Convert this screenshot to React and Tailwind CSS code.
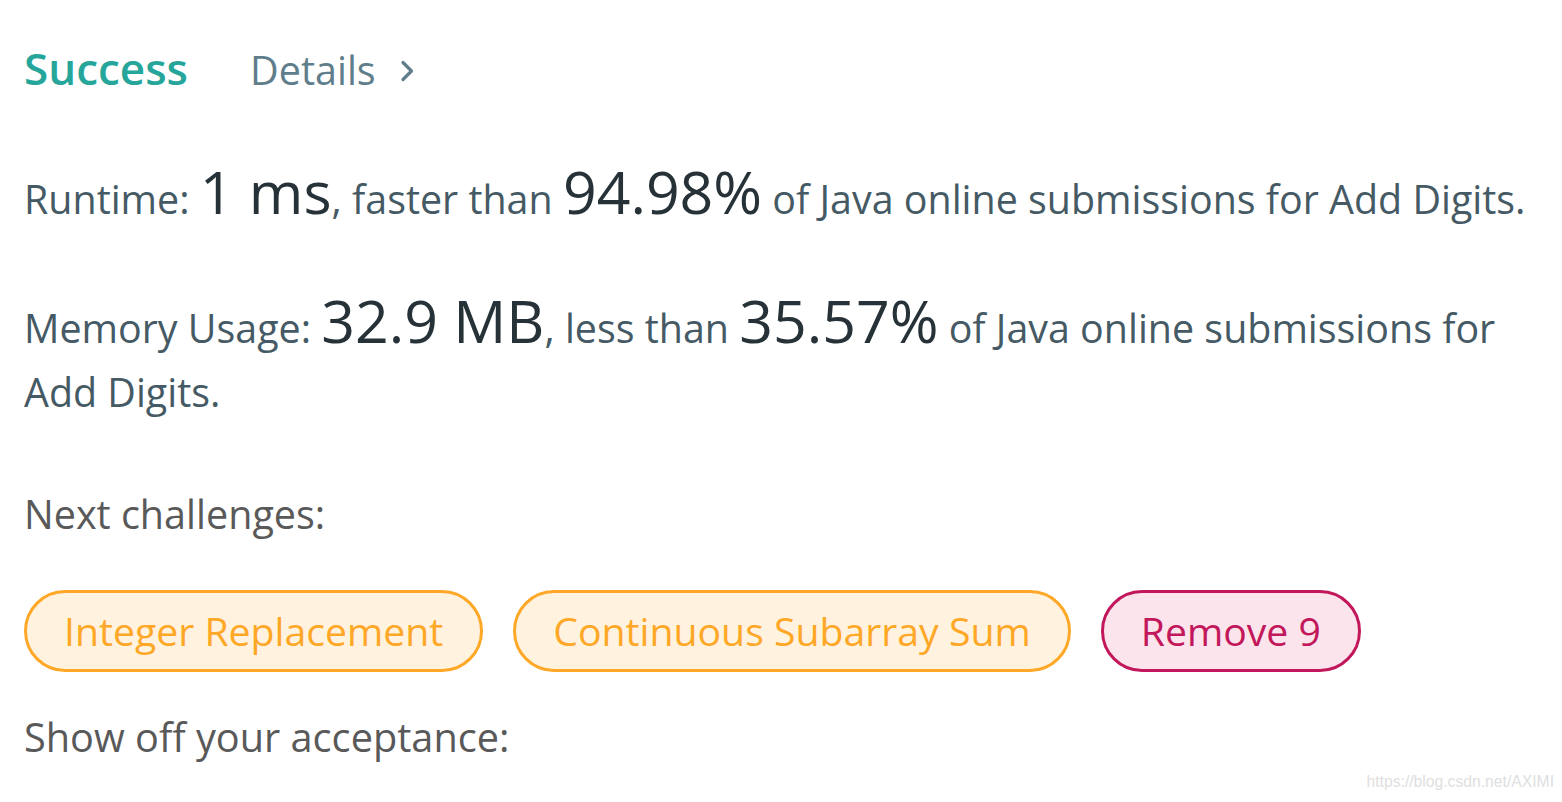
import React from 'react';

const challenges = [
  { title: 'Integer Replacement', level: 'medium' },
  { title: 'Continuous Subarray Sum', level: 'medium' },
  { title: 'Remove 9', level: 'hard' },
];

const Chevron = () => (
  <svg width="14" height="22" viewBox="0 0 14 22" className="ml-[24px] self-center translate-y-[2px]">
    <path d="M3 2.5 L11.5 11 L3 19.5" fill="none" stroke="#607d8b" strokeWidth="3.2" strokeLinecap="round" strokeLinejoin="round" />
  </svg>
);

const Pill = ({ title, level }) => {
  const tone = level === 'hard'
    ? 'border-[#c2185b] bg-[#fce4ec] text-[#c2185b]'
    : 'border-[#ffa726] bg-[#fff3e0] text-[#ffa726]';
  return (
    <a className={`inline-flex h-[82px] items-center rounded-full border-[3px] px-[37px] text-[39.2px] ${tone}`}>
      {title}
    </a>
  );
};

export default function App() {
  return (
    <div
      className="relative h-[802px] w-[1562px] overflow-hidden bg-white pl-[24px] pt-[36px]"
      style={{ fontFamily: '"Open Sans", "Noto Sans", sans-serif' }}
    >
      <div className="flex items-baseline leading-[64px]">
        <span className="text-[44px] font-semibold text-[#26a69a]">Success</span>
        <span className="ml-[62px] text-[39.5px] text-[#607d8b]">Details</span>
        <Chevron />
      </div>

      <div className="mt-[60px] w-[1530px] text-[39.4px] leading-[64px] text-[#455a64]">
        Runtime: <span className="text-[59px] leading-none text-[#263238]">1 ms</span>, faster than{' '}
        <span className="text-[59px] leading-none text-[#263238]">94.98%</span> of Java online submissions for Add Digits.
      </div>

      <div className="mt-[60px] w-[1500px] text-[39.4px] leading-[64px] text-[#455a64]">
        Memory Usage: <span className="text-[59px] leading-none text-[#263238]">32.9 MB</span>, less than{' '}
        <span className="text-[59px] leading-none text-[#263238]">35.57%</span> of Java online submissions for Add Digits.
      </div>

      <div className="mt-[58px] text-[39.5px] leading-[64px] text-[#595959]">Next challenges:</div>

      <div className="mt-[44px] flex gap-[30px]">
        {challenges.map((c) => (
          <Pill key={c.title} {...c} />
        ))}
      </div>

      <div className="mt-[33px] text-[39.7px] leading-[64px] text-[#595959]">Show off your acceptance:</div>

      <div
        className="absolute bottom-[8px] right-[8px] text-[15.7px] text-[#e0e0e0]"
        style={{ fontFamily: '"Liberation Sans", Arial, sans-serif' }}
      >
        https://blog.csdn.net/AXIMI
      </div>
    </div>
  );
}
